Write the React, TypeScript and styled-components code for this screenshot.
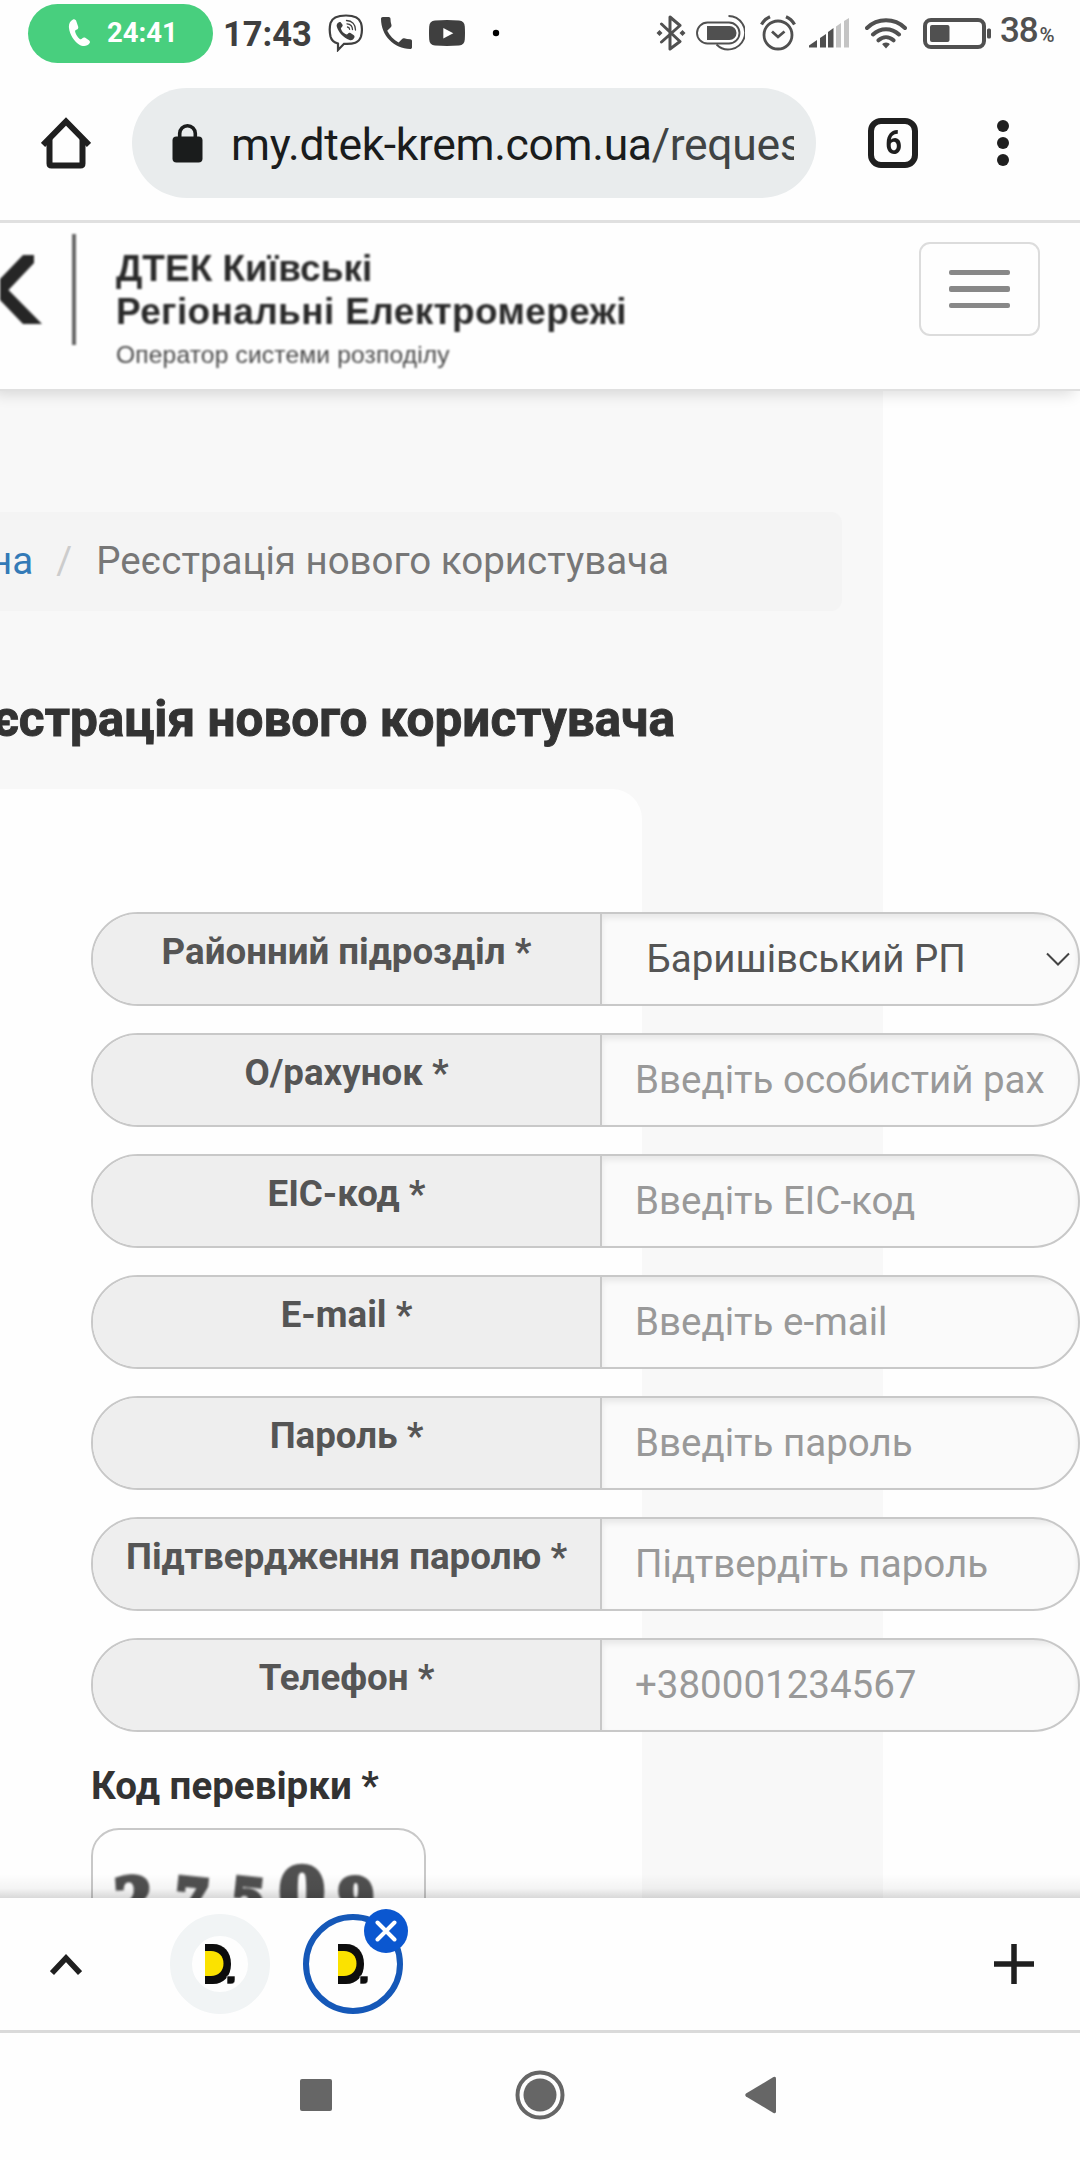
import React from 'react';
import styled, { createGlobalStyle } from 'styled-components';

const GlobalStyle = createGlobalStyle`
  * { box-sizing: border-box; }
  body { margin: 0; background: #fefefe; font-family: Roboto, "Noto Sans", sans-serif; }
`;

const Phone = styled.div`
  width: 1080px;
  height: 2160px;
  display: flex;
  flex-direction: column;
  overflow: hidden;
  background: #fefefe;
`;

/* ---------- status bar ---------- */

const StatusBar = styled.div`
  height: 66px;
  flex: none;
  display: flex;
  align-items: center;
  padding: 0 26px 0 28px;
  color: #3f3f3f;
`;

const CallPill = styled.div`
  width: 185px;
  height: 59px;
  border-radius: 30px;
  background: #48cf7e;
  color: #fff;
  display: flex;
  align-items: center;
  padding-left: 40px;
  gap: 16px;
  font-size: 27.5px;
  font-weight: 700;
  line-height: 32px;
`;

const Clock = styled.span`
  width: 115px;
  padding: 2px 0 0 10px;
  font-size: 34.500px;
  font-weight: 700;
  line-height: 40px;
`;

const StatusIcons = styled.div<{ $gap: number }>`
  display: flex;
  align-items: center;
  gap: ${(p) => p.$gap}px;
`;

const Indicators = styled.div`
  display: flex;
  align-items: center;
  margin-left: auto;
  color: #505050;
`;

const Percent = styled.span`
  margin-left: 8px;
  width: 54px;
  font-size: 35px;
  line-height: 40px;
  font-weight: 500;
  letter-spacing: -1.200px;
  white-space: nowrap;
  small { font-size: 20.500px; margin-left: 2px; letter-spacing: 0; }
`;

/* ---------- browser toolbar ---------- */

const Toolbar = styled.div`
  height: 157px;
  flex: none;
  display: flex;
  align-items: center;
  padding: 0 71px 0 41px;
  border-bottom: 3px solid #e0e0e0;
  color: #1f1f1f;
`;

const AddressBar = styled.div`
  width: 684px;
  height: 110px;
  margin-left: 41px;
  padding: 0 22px 0 40px;
  border-radius: 55px;
  background: #e9eced;
  display: flex;
  align-items: center;
`;

const Url = styled.div`
  flex: 1;
  margin-left: 28px;
  padding-top: 3px;
  overflow: hidden;
  white-space: nowrap;
  font-size: 44.500px;
  letter-spacing: -0.350px;
  line-height: 56px;
  color: #1a1c1c;
  span { color: #404444; }
`;

const TabCount = styled.div`
  width: 50px;
  height: 50px;
  margin-left: 52px;
  border: 6px solid #1f1f1f;
  border-radius: 13px;
  display: flex;
  align-items: center;
  justify-content: center;
  font-size: 33px;
  font-weight: 700;
  line-height: 38px;
  span { transform: scaleX(0.88); }
`;

const Menu = styled.div`
  display: flex;
  flex-direction: column;
  gap: 5px;
  margin-left: auto;
  i { width: 12px; height: 12px; border-radius: 50%; background: #1f1f1f; }
`;

/* ---------- web page ---------- */

const Viewport = styled.main`
  height: 1675px;
  flex: none;
  display: flex;
  flex-direction: column;
  position: relative;
  overflow: hidden;
`;

const SiteHeader = styled.header`
  height: 168px;
  flex: none;
  display: flex;
  justify-content: space-between;
  padding: 11px 40px 0 0;
  border-bottom: 2px solid #e0e0e0;
  background: #fefefe;
  box-shadow: -6px 3px 14px rgba(0, 0, 0, 0.14);
  position: relative;
  z-index: 1;
`;

const Brand = styled.div`
  display: flex;
  filter: blur(0.9px);
  font-family: "Liberation Sans", Arial, sans-serif;
  color: #2a2a2a;
`;

const BrandRule = styled.div`
  width: 4px;
  height: 111px;
  margin: 0 40px 0 30px;
  background: #666;
`;

const BrandText = styled.div`
  display: flex;
  flex-direction: column;
  padding-top: 13px;
  white-space: nowrap;
`;

const BrandName = styled.strong<{ $track: number }>`
  font-size: 37px;
  line-height: 43px;
  letter-spacing: ${(p) => p.$track}px;
`;

const BrandNote = styled.span`
  margin-top: 4px;
  font-size: 24.500px;
  line-height: 36px;
  letter-spacing: 0.200px;
  color: #484848;
`;

const Burger = styled.div`
  width: 121px;
  height: 94px;
  margin-top: 8px;
  border: 2px solid #dcdcdc;
  border-radius: 11px;
  display: flex;
  flex-direction: column;
  align-items: center;
  justify-content: center;
  gap: 11px;
  i { width: 61px; height: 5.500px; border-radius: 2px; background: #888; }
`;

const Content = styled.section`
  width: 883px;
  flex: 1;
  display: flex;
  flex-direction: column;
  align-items: flex-start;
  padding-top: 121px;
  background: #f8f8f8;
`;

const Breadcrumb = styled.nav`
  width: 842px;
  height: 99px;
  flex: none;
  display: flex;
  align-items: center;
  justify-content: flex-end;
  padding: 0 173px 2px 0;
  border-radius: 0 11px 11px 0;
  background: #f4f4f4;
  font-size: 38.500px;
  line-height: 46px;
  white-space: nowrap;
  color: #777;
  a { color: #337ab7; }
  i { font-style: normal; color: #ccc; margin: 0 24px 0 23px; }
`;

const Title = styled.h1`
  width: 675px;
  margin: 80px 0 42px;
  display: flex;
  justify-content: flex-end;
  white-space: nowrap;
  font-size: 49.500px;
  font-weight: 700;
  line-height: 56px;
  -webkit-text-stroke: 0.900px #333;
  color: #333;
`;

const Card = styled.div`
  width: 642px;
  flex: 1;
  padding: 123px 0 0 91px;
  border-top-right-radius: 30px;
  background: #fefefe;
`;

const Form = styled.form`
  width: 989px;
  display: flex;
  flex-direction: column;
  gap: 27px;
`;

const Field = styled.label`
  height: 94px;
  display: flex;
  border: 2px solid #c8c8c8;
  border-radius: 47px;
  overflow: hidden;
  background: #fafafa;
`;

const FieldName = styled.span`
  width: 509px;
  flex: none;
  padding-top: 18px;
  border-right: 2px solid #c8c8c8;
  background: #eee;
  text-align: center;
  font-size: 36.700px;
  font-weight: 700;
  line-height: 40px;
  white-space: nowrap;
  color: #555;
`;

const Control = styled.span<{ $select?: boolean }>`
  flex: 1;
  display: flex;
  align-items: center;
  justify-content: space-between;
  padding: ${(p) => (p.$select ? '0 8px 0 44.500px' : '0 34px 0 33px')};
  box-shadow: inset 0 4px 6px rgba(0, 0, 0, 0.08);
  font-size: 38.500px;
  line-height: 46px;
  white-space: nowrap;
  color: ${(p) => (p.$select ? '#555' : '#999')};
`;

const CaptchaLabel = styled.div`
  margin: 32px 0 20px;
  font-size: 38.500px;
  font-weight: 700;
  line-height: 44px;
  color: #333;
`;

const Captcha = styled.div`
  width: 335px;
  height: 130px;
  display: flex;
  align-items: flex-start;
  padding: 0 0 0 22px;
  border: 2px solid #c8c8c8;
  border-radius: 28px;
  font-family: "DejaVu Serif", serif;
  font-weight: 700;
  color: #505050;
`;

const Digit = styled.span<{ $size: number; $top: number; $width: number; $turn: number }>`
  width: ${(p) => p.$width}px;
  margin-top: ${(p) => p.$top}px;
  font-size: ${(p) => p.$size}px;
  line-height: 1;
  transform: rotate(${(p) => p.$turn}deg);
  transform-origin: 20px 50%;
  -webkit-text-stroke: 5px #505050;
  filter: blur(1px);
`;

const BottomShade = styled.div`
  position: absolute;
  left: 0;
  right: 0;
  bottom: 0;
  height: 24px;
  background: linear-gradient(to bottom, rgba(0, 0, 0, 0), rgba(0, 0, 0, 0.04) 60%, rgba(0, 0, 0, 0.15));
`;

/* ---------- tab strip and system navigation ---------- */

const TabStrip = styled.div`
  height: 135px;
  flex: none;
  display: flex;
  align-items: center;
  padding: 0 46px 0 50px;
  border-bottom: 3px solid #dadada;
`;

const Tab = styled.div<{ $active?: boolean }>`
  width: 100px;
  height: 100px;
  position: relative;
  margin-left: ${(p) => (p.$active ? 32.5 : 88)}px;
  border-radius: 50%;
  border: ${(p) => (p.$active ? '6px solid #1558b8' : '22px solid #f1f4f5')};
  background: #fefefe;
  display: flex;
  align-items: center;
  justify-content: center;
`;

const CloseBadge = styled.span`
  position: absolute;
  top: -11px;
  right: -11px;
  width: 44px;
  height: 44px;
  border-radius: 50%;
  background: #0b57d0;
  display: flex;
  align-items: center;
  justify-content: center;
`;

const Plus = styled.svg`
  margin-left: auto;
`;

const NavBar = styled.div`
  height: 127px;
  flex: none;
  display: flex;
  align-items: center;
  justify-content: space-between;
  padding: 0 304px 3px 300px;
`;

const Square = styled.i`
  width: 32px;
  height: 32px;
  margin-right: 3px;
  border-radius: 2px;
  background: #666;
`;

/* ---------- icons ---------- */

const handset =
  'M6.62 10.79c1.44 2.83 3.76 5.14 6.59 6.59l2.2-2.2c.27-.27.67-.36 1.02-.24 1.12.37 2.33.57 3.57.57.55 0 1 .45 1 1V20c0 .55-.45 1-1 1-9.39 0-17-7.61-17-17 0-.55.45-1 1-1h3.5c.55 0 1 .45 1 1 0 1.25.2 2.45.57 3.57.11.35.03.74-.25 1.02l-2.2 2.2z';

const PillPhone = () => (
  <svg width="23" height="28" viewBox="0 0 23 28">
    <path d="M5 0.5C2 2 .5 5 1 9c.8 6.500 4.500 12.500 10 16.500 4 2.500 8.500 1.800 10.500-1.200.8-1.200.5-2.300-.6-3.100l-3.600-2.400c-1.200-.7-2.300-.3-3.200.8-.7.8-1.500 1-2.400.3-2.200-1.900-3.700-4.300-4.500-7-.3-1.100 0-1.800 1.100-2.200 1.500-.5 2.200-1.400 1.900-2.900L8.400 2.600C8 .8 6.700-.2 5 .5z" fill="#fff" />
  </svg>
);

const Viber = () => (
  <svg width="36" height="38" viewBox="0 0 36 38" fill="none" stroke="#3f3f3f">
    <path d="M18 1.500C8 1.500 4 4 2.500 9c-1 4-1 9 0 13.500C3.500 26.500 6 28.500 10 29.500V36l6-6.200c9.500.5 15-1 17-7.300 1.200-4.500 1.200-9.500 0-13.500C31.500 4 27 1.500 18 1.500z" strokeWidth="2.200" />
    <path d="M11.500 8c-2 .8-3.400 2.600-2.700 4.800 2 6 6.500 10.700 12.700 13.200 2.500.9 4-.8 4.900-2.600.4-1-.1-1.700-.9-2.300l-3-2.100c-1.100-.6-1.900-.2-2.600.7-.7 1-1.400 1-2.500.4-2.200-1.200-3.600-2.800-4.400-5-.3-1 .2-1.500.9-2.100.9-.7 1-1.500.5-2.400l-1.500-2.200c-.4-.5-.8-.6-1.400-.4z" fill="#3f3f3f" stroke="none" />
    <path d="M18.500 6.500c5.500.3 9 4 9 9.500M19 9.800c3.500.2 5.400 2.400 5.500 5.800M19.500 13c1.400.2 2 1 2.100 2.300" strokeWidth="1.300" strokeLinecap="round" />
  </svg>
);

const Bluetooth = () => (
  <svg width="30" height="36" viewBox="0 0 30 36" fill="none" stroke="currentColor" strokeWidth="3">
    <path d="M5.500 9L24 26.500 14 34V2l10 8.500L5.500 27" strokeLinejoin="round" strokeLinecap="round" />
    <path d="M3.500 15l3 3-3 3-3-3zM26.500 15l3 3-3 3-3-3z" fill="currentColor" stroke="none" />
  </svg>
);

const Toggle = () => (
  <svg width="49" height="36" viewBox="0 0 49 36" fill="none" stroke="currentColor" strokeWidth="1.900">
    <rect x="1" y="7.500" width="42.500" height="21" rx="10.500" />
    <path d="M11 11h22.500a7 7 0 0 1 0 14H11z" fill="currentColor" stroke="none" />
    <path d="M32.500 1A16.700 16.700 0 1 1 20.500 29.500" />
  </svg>
);

const Alarm = () => (
  <svg width="36" height="36" viewBox="0 0 36 36" fill="none" stroke="currentColor" strokeWidth="2.800">
    <circle cx="18" cy="20" r="14" />
    <path d="M12 16.500l6 5.500 6.500-5.500" />
    <path d="M1.500 9.500C3.500 6 6.500 3.300 10 1.800M34.500 9.500C32.500 6 29.500 3.300 26 1.800" strokeWidth="3.300" />
  </svg>
);

const Signal = () => (
  <svg width="41" height="30" viewBox="0 0 41 30">
    <path d="M0 29.500V27.500L8 22v7.500zM11 29.500V20l6-4v13.500zM19 29.500V14l5.500-4v19.500z" fill="#505050" />
    <path d="M27 29.500V8.500l5-3.500v24.500zM35 29.500V3l5-3v29.500z" fill="#c4c4c4" />
  </svg>
);

const Wifi = () => (
  <svg width="42" height="31" viewBox="0 0 42 31" fill="none" stroke="currentColor" strokeWidth="4">
    <path d="M2 10C12.500-.2 29.500-.2 40 10M8 16.500c7.500-7 18.500-7 26 0M13.500 22.300c4.500-4 10.500-4 15 0" strokeLinecap="round" />
    <path d="M21 24.500c1.700 0 3.200.8 3.800 1.800L21 30.500l-3.800-4.200c.6-1 2.100-1.800 3.800-1.800z" fill="currentColor" stroke="none" />
  </svg>
);

const Battery = () => (
  <svg width="69" height="31" viewBox="0 0 69 31">
    <rect x="2" y="2" width="59" height="27" rx="6" fill="none" stroke="#505050" strokeWidth="4" />
    <rect x="7" y="7" width="19.500" height="17" rx="2" fill="#505050" />
    <rect x="64" y="10.500" width="4" height="10" rx="1.500" fill="#505050" />
  </svg>
);

const FaviconArt = styled.svg`
  flex: none;
`;

const Favicon = () => (
  <FaviconArt width="30" height="40" viewBox="0 0 30 40">
    <path d="M0 0h8C19 0 26 8 26 20S19 40 8 40H0z" fill="#0d0d0d" />
    <path d="M0 7h6c7.500 0 12.500 5 12.500 12.500S13.500 32 6 32H0z" fill="#fbe200" />
    <path d="M22 32h8v4c0 2.500-1.500 4-4 4h-4z" fill="#0d0d0d" stroke="#fefefe" strokeWidth="0.600" />
  </FaviconArt>
);

const fields = [
  { name: 'О/рахунок *', hint: 'Введіть особистий рах' },
  { name: 'EIC-код *', hint: 'Введіть EIC-код' },
  { name: 'E-mail *', hint: 'Введіть e-mail' },
  { name: 'Пароль *', hint: 'Введіть пароль' },
  { name: 'Підтвердження паролю *', hint: 'Підтвердіть пароль' },
  { name: 'Телефон *', hint: '+380001234567' },
];

export default function App() {
  return (
    <Phone>
      <GlobalStyle />
      <StatusBar>
        <CallPill>
          <PillPhone />
          24:41
        </CallPill>
        <Clock>17:43</Clock>
        <StatusIcons $gap={17}>
          <Viber />
          <svg width="31" height="32" viewBox="3 3 18 18" preserveAspectRatio="none">
            <path d={handset} fill="#3f3f3f" />
          </svg>
          <svg width="36" height="26" viewBox="0 0 36 26">
            <path d="M6 .5Q18-.5 30 .5 35.500 1 35.800 6.500q.4 6.500 0 13Q35.500 25 30 25.500q-12 .8-24 0Q.5 25 .2 19.500q-.4-6.500 0-13Q.5 1 6 .5z" fill="#3f3f3f" />
            <path d="M14.300 8v10.500l10-5.200z" fill="#fff" />
          </svg>
          <svg width="30" height="8" viewBox="0 0 30 8">
            <circle cx="14" cy="4" r="3.200" fill="#000" />
          </svg>
        </StatusIcons>
        <Indicators>
          <StatusIcons $gap={15}>
            <StatusIcons $gap={10}>
              <Bluetooth />
              <Toggle />
            </StatusIcons>
            <StatusIcons $gap={13}>
              <Alarm />
              <Signal />
            </StatusIcons>
            <StatusIcons $gap={16}>
              <Wifi />
              <Battery />
            </StatusIcons>
          </StatusIcons>
          <Percent>
            38<small>%</small>
          </Percent>
        </Indicators>
      </StatusBar>

      <Toolbar>
        <svg width="50" height="52" viewBox="0 0 50 52" fill="none" stroke="#1f1f1f" strokeWidth="6">
          <path d="M2 28L25 4.500 48 28" strokeLinejoin="miter" />
          <path d="M8.500 22v24.500q0 2 2 2h29q2 0 2-2V22" />
        </svg>
        <AddressBar>
          <svg width="31" height="40" viewBox="0 0 31 40">
            <path d="M7.700 15V10.500a7.800 7.800 0 0 1 15.600 0V15" fill="none" stroke="#1a1c1c" strokeWidth="3.600" />
            <rect x="0.500" y="13.500" width="30" height="26" rx="4" fill="#1a1c1c" />
          </svg>
          <Url>
            my.dtek-krem.com.ua<span>/reques</span>
          </Url>
        </AddressBar>
        <TabCount>
          <span>6</span>
        </TabCount>
        <Menu>
          <i />
          <i />
          <i />
        </Menu>
      </Toolbar>

      <Viewport>
        <SiteHeader>
          <Brand>
            <svg width="42" height="111" viewBox="0 0 42 111">
              <path d="M23 21h11v8L8.500 56 42 90H23L0 66V45z" fill="#262626" />
            </svg>
            <BrandRule />
            <BrandText>
              <BrandName $track={0}>ДТЕК Київські</BrandName>
              <BrandName $track={0.38}>Регіональні Електромережі</BrandName>
              <BrandNote>Оператор системи розподілу</BrandNote>
            </BrandText>
          </Brand>
          <Burger>
            <i />
            <i />
            <i />
          </Burger>
        </SiteHeader>
        <Content>
          <Breadcrumb>
            <a>Головна</a>
            <i>/</i>
            <span>Реєстрація нового користувача</span>
          </Breadcrumb>
          <Title>Реєстрація нового користувача</Title>
          <Card>
            <Form>
              <Field>
                <FieldName>Районний підрозділ *</FieldName>
                <Control $select>
                  Баришівський РП
                  <svg width="24" height="15" viewBox="0 0 24 15" fill="none" stroke="#444" strokeWidth="2">
                    <path d="M1 1.500l11 11 11-11" />
                  </svg>
                </Control>
              </Field>
              {fields.map((f) => (
                <Field key={f.name}>
                  <FieldName>{f.name}</FieldName>
                  <Control>{f.hint}</Control>
                </Field>
              ))}
            </Form>
            <CaptchaLabel>Код перевірки *</CaptchaLabel>
            <Captcha>
              <Digit $size={54} $top={41} $width={60} $turn={-4}>2</Digit>
              <Digit $size={48} $top={44} $width={56} $turn={6}>7</Digit>
              <Digit $size={48} $top={44} $width={48} $turn={6}>5</Digit>
              <Digit $size={66} $top={29} $width={59} $turn={0}>0</Digit>
              <Digit $size={52} $top={42} $width={50} $turn={0}>9</Digit>
            </Captcha>
          </Card>
        </Content>
        <BottomShade />
      </Viewport>

      <TabStrip>
        <svg width="32" height="22" viewBox="0 0 32 22" fill="none" stroke="#1f1f1f" strokeWidth="5.500">
          <path d="M2 20L16 5l14 15" />
        </svg>
        <Tab>
          <Favicon />
        </Tab>
        <Tab $active>
          <Favicon />
          <CloseBadge>
            <svg width="22" height="22" viewBox="0 0 22 22" stroke="#fff" strokeWidth="4" strokeLinecap="round">
              <path d="M2.500 2.500l17 17M19.500 2.500l-17 17" />
            </svg>
          </CloseBadge>
        </Tab>
        <Plus width="40" height="40" viewBox="0 0 40 40" stroke="#1f1f1f" strokeWidth="5.500">
          <path d="M20 0v40M0 20h40" />
        </Plus>
      </TabStrip>

      <NavBar>
        <Square />
        <svg width="50" height="50" viewBox="0 0 50 50">
          <circle cx="25" cy="25" r="22.500" fill="none" stroke="#666" strokeWidth="4" />
          <circle cx="25" cy="25" r="16.500" fill="#666" />
        </svg>
        <svg width="31" height="38" viewBox="0 0 31 38">
          <path d="M1 17.500L28.500 1Q31 0 31 2.500v33Q31 38 28.500 37L1 20.500Q-.5 19 1 17.500z" fill="#666" />
        </svg>
      </NavBar>
    </Phone>
  );
}
